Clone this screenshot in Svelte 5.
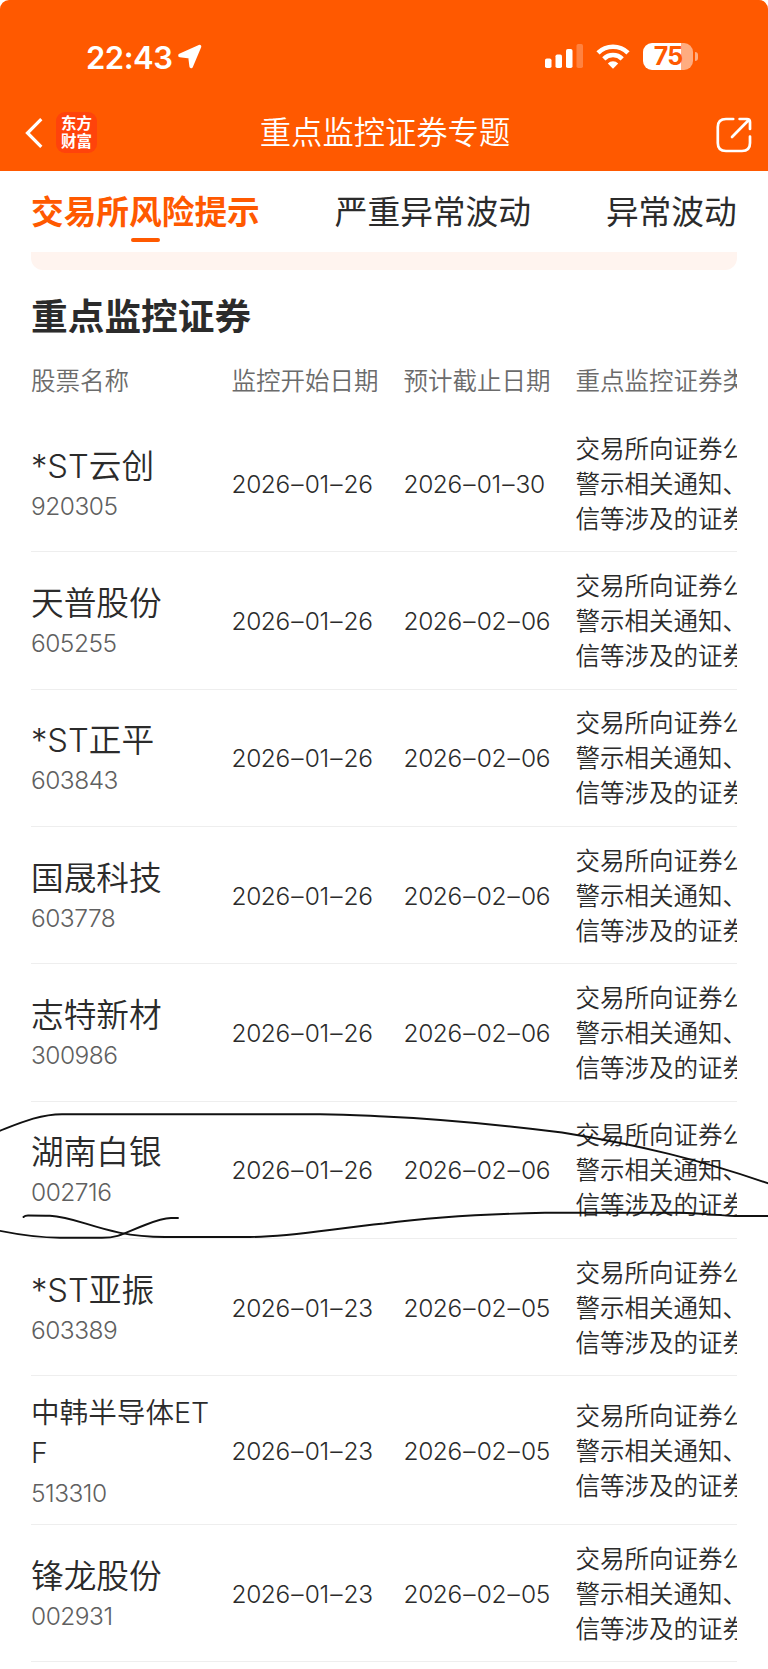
<!--
	MonitoredSecurities — phone screen listing securities under key monitoring.

	Orange status/nav header, a scrollable tab strip and a table whose last
	column is cut off at the right edge. A freehand mark circles one of the rows.
-->

<script lang="ts">
	interface Stock {
		name: string;
		code: string;
		start: string;
		end: string;
		long?: boolean;
	}

	const tabs = ['交易所风险提示', '严重异常波动', '异常波动'];
	let active = $state(0);

	const columns = ['股票名称', '监控开始日期', '预计截止日期', '重点监控证券类'];
	const reason = ['交易所向证券公', '警示相关通知、', '信等涉及的证券'];

	const stocks: Stock[] = [
		{ name: '*ST云创', code: '920305', start: '2026-01-26', end: '2026-01-30' },
		{ name: '天普股份', code: '605255', start: '2026-01-26', end: '2026-02-06' },
		{ name: '*ST正平', code: '603843', start: '2026-01-26', end: '2026-02-06' },
		{ name: '国晟科技', code: '603778', start: '2026-01-26', end: '2026-02-06' },
		{ name: '志特新材', code: '300986', start: '2026-01-26', end: '2026-02-06' },
		{ name: '湖南白银', code: '002716', start: '2026-01-26', end: '2026-02-06' },
		{ name: '*ST亚振', code: '603389', start: '2026-01-23', end: '2026-02-05' },
		{ name: '中韩半导体ETF', code: '513310', start: '2026-01-23', end: '2026-02-05', long: true },
		{ name: '锋龙股份', code: '002931', start: '2026-01-23', end: '2026-02-05' }
	];
</script>

{#snippet date(value: string)}
	<div class="date">
		{#each value.split('-') as part, i}{#if i > 0}<span class="dash">–</span>{/if}{part}{/each}
	</div>
{/snippet}

<div class="screen">
	<header class="header">
		<div class="status">
			<div class="clock">
				<span>22:43</span>
				<svg width="26" height="26" viewBox="0 0 26 26" aria-hidden="true">
					<path
						d="M3 11.5 22.5 2.6 14.2 22.4 13 12.8Z"
						fill="#fff"
						stroke="#fff"
						stroke-width="3.6"
						stroke-linejoin="round"
					/>
				</svg>
			</div>
			<div class="indicators">
				<svg width="38" height="24" viewBox="0 0 38 24" fill="#fff" aria-hidden="true">
					<rect x="0" y="14.5" width="6.5" height="9.5" rx="1.8" />
					<rect x="10.5" y="10.5" width="6.5" height="13.5" rx="1.8" />
					<rect x="21" y="5" width="6.5" height="19" rx="1.8" />
					<rect x="31.5" y="0" width="6.5" height="24" rx="1.8" opacity="0.25" />
				</svg>
				<svg width="34" height="25" viewBox="0 0 34 25" aria-hidden="true">
					<g fill="none" stroke="#fff" stroke-width="4.6">
						<path d="M2 8.9A21.4 21.4 0 0 1 32 8.9" />
						<path d="M7.8 14.8A13.2 13.2 0 0 1 26.2 14.8" />
					</g>
					<path d="M11.8 19.4A7.4 7.4 0 0 1 22.2 19.4L17 24.8Z" fill="#fff" />
				</svg>
				<div class="battery"><span>75</span></div>
			</div>
		</div>
		<nav class="nav">
			<button class="back" aria-label="返回">
				<svg width="18" height="32" viewBox="0 0 18 32" aria-hidden="true">
					<path d="M16.3 2.2 2.5 16 16.3 29.8" fill="none" stroke="#fff" stroke-width="3.2" />
				</svg>
			</button>
			<div class="logo"><span>东方</span><span>财富</span></div>
			<h1 class="title">重点监控证券专题</h1>
			<button class="share" aria-label="分享">
				<svg width="36" height="36" viewBox="0 0 36 36" aria-hidden="true">
					<g
						fill="none"
						stroke="#fff"
						stroke-width="2.7"
						stroke-linecap="round"
						stroke-linejoin="round"
					>
						<path d="M17.2 2H10Q1.8 2 1.8 10V26Q1.8 34 10 34H26Q34 34 34 26V19.5" />
						<path d="M16 20 32.5 3.2M23.6 2H31Q34 2 34 5V12" />
					</g>
				</svg>
			</button>
		</nav>
	</header>

	<div class="tabs" role="tablist">
		{#each tabs as tab, i}
			<button
				class="tab"
				class:tab--active={i === active}
				role="tab"
				aria-selected={i === active}
				onclick={() => (active = i)}
			>
				{tab}
			</button>
		{/each}
	</div>

	<main class="content">
		<div class="notice"></div>
		<h2 class="heading">重点监控证券</h2>
		<div class="row row--head">
			{#each columns as column}
				<span>{column}</span>
			{/each}
		</div>
		{#each stocks as stock}
			<div class="row" class:row--long={stock.long}>
				<div class="stock">
					<div class="name">{stock.name}</div>
					<div class="code">{stock.code}</div>
				</div>
				{@render date(stock.start)}
				{@render date(stock.end)}
				<div class="reason">
					{#each reason as line}
						<div>{line}</div>
					{/each}
				</div>
			</div>
		{/each}
	</main>

	<!-- Freehand circle and underline over the 湖南白银 row -->
	<svg class="scribble" width="768" height="150" viewBox="0 0 768 150" aria-hidden="true">
		<g fill="none" stroke="#111" stroke-width="1.9" stroke-linecap="round">
			<path
				d="M-2 31.5C20 23 40 14.2 62 14.2H320C350 14.2 370 16 384 16.5C450 19.5 510 26 562 32.5C640 45 700 60 770 84"
			/>
			<path
				d="M770 116H735C715 115.5 700 112.8 680 112.8H545C490 114 430 117.5 384 123.5C330 129 290 137 250 137H165C105 137 80 117 50 115.8C42 115.5 35 115.5 28 115.5Q25 115.5 23.5 117"
			/>
			<path
				d="M-2 130.5C20 135 40 137.7 60 137.7H102C120 137.7 125 132.5 145 125C155 121 163 118 171 118H178"
			/>
		</g>
	</svg>
</div>

<style>
	:global(body) {
		background: #fff;
	}

	.screen {
		position: relative;
		width: 768px;
		height: 1669px;
		overflow: hidden;
		background: #fff;
		color: #2b2b2b;
		font-family: Inter, 'Noto Sans CJK SC', sans-serif;
	}

	button {
		padding: 0;
		border: none;
		background: none;
		font: inherit;
		color: inherit;
		cursor: pointer;
	}

	.header {
		height: 171px;
		box-sizing: border-box;
		padding-top: 36px;
		background: #ff5900;
		border-radius: 9px 9px 0 0;
		color: #fff;
	}

	.status {
		display: flex;
		justify-content: space-between;
		align-items: center;
		height: 42px;
		padding: 0 75px 0 86px;
	}

	.clock {
		display: flex;
		align-items: center;
		gap: 5px;
		font-size: 31px;
		font-weight: 600;
		letter-spacing: -0.5px;
	}

	.indicators {
		display: flex;
		align-items: center;
		gap: 13px;
		margin-top: -2px;
	}

	.battery {
		position: relative;
		width: 50px;
		height: 27px;
		border-radius: 9px;
		background: linear-gradient(to right, #fff 76%, #ffac80 76%);
		color: #ff5900;
		font-size: 25px;
		font-weight: 700;
		line-height: 27px;
		text-align: center;
		letter-spacing: -0.8px;
	}

	.battery::after {
		content: '';
		position: absolute;
		left: 51.5px;
		top: 9px;
		width: 3px;
		height: 9px;
		border-radius: 0 4px 4px 0;
		background: #ffac80;
	}

	.nav {
		display: grid;
		grid-template-columns: 18px 41px 1fr 36px;
		align-items: center;
		height: 82px;
		padding: 4px 16px 0 25px;
		margin-top: 11.5px;
		box-sizing: border-box;
		column-gap: 13px;
	}

	.back,
	.share {
		display: flex;
	}

	.share {
		margin-top: 5px;
	}

	.logo {
		display: flex;
		flex-direction: column;
		align-items: center;
		justify-content: center;
		width: 41px;
		height: 41px;
		border-radius: 9px;
		background: #ff430b;
		font-size: 15.5px;
		font-weight: 700;
		line-height: 17.5px;
	}

	.title {
		margin: 0 43px 0 0;
		font-size: 31.3px;
		font-weight: 350;
		line-height: 42px;
		text-align: center;
	}

	.tabs {
		display: flex;
		gap: 75px;
		height: 81px;
		padding: 0 31px;
		overflow: hidden;
	}

	.tab {
		position: relative;
		flex: none;
		height: 80px;
		font-size: 32.7px;
		line-height: 82px;
	}

	.tab--active {
		color: #ff5900;
		font-weight: 700;
	}

	.tab--active::after {
		content: '';
		position: absolute;
		left: 50%;
		top: 67px;
		width: 29px;
		height: 4px;
		margin-left: -14.5px;
		border-radius: 2px;
		background: #ff5900;
	}

	.content {
		margin: 0 31px;
		overflow: hidden;
	}

	.notice {
		height: 18px;
		border-radius: 0 0 12px 12px;
		background: #fff4ef;
	}

	.heading {
		margin: 21px 0 0;
		font-size: 36.7px;
		font-weight: 700;
		line-height: 52px;
	}

	.row {
		display: grid;
		grid-template-columns: 200.5px 172px 172px 1fr;
		align-items: center;
		height: 137.35px;
		box-sizing: border-box;
		padding-top: 2px;
		border-bottom: 1.5px solid #eee;
		font-size: 24.5px;
		font-weight: 350;
		white-space: nowrap;
	}

	.row--head {
		height: 72px;
		padding: 0;
		border: none;
		color: #6b6b6b;
	}

	.row--long {
		height: 148.5px;
	}

	.stock {
		margin-top: -3px;
	}

	.name {
		font-size: 32.7px;
		line-height: 46px;
	}

	.row--long .stock {
		margin-top: 1px;
	}

	.row--long .name {
		width: 182px;
		margin-bottom: 3px;
		font-size: 28.6px;
		line-height: 40px;
		white-space: normal;
		word-break: break-all;
	}

	.code {
		color: #606060;
		line-height: 34px;
		letter-spacing: -0.5px;
	}

	.date {
		margin-top: -1px;
		letter-spacing: -0.4px;
	}

	.dash {
		padding: 0 1.5px;
	}

	.reason {
		line-height: 35px;
	}

	.scribble {
		position: absolute;
		left: 0;
		top: 1100px;
		pointer-events: none;
	}
</style>
